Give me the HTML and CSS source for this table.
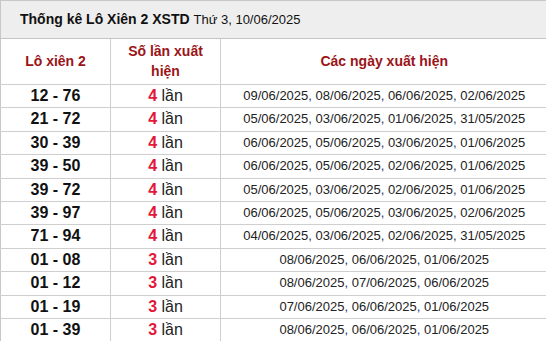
FILE: index.html
```html
<!DOCTYPE html>
<html lang="vi">
<head>
<meta charset="utf-8">
<title>Thống kê Lô Xiên 2 XSTD</title>
<link rel="stylesheet" href="styles.css">
</head>
<body>
<table class="stats">
  <colgroup>
    <col class="c1">
    <col class="c2">
    <col class="c3">
  </colgroup>
  <thead>
    <tr>
      <th class="title" colspan="3"><b>Thống kê Lô Xiên 2 XSTD</b> <span class="date">Thứ 3, 10/06/2025</span></th>
    </tr>
    <tr class="head">
      <th>Lô xiên 2</th>
      <th>Số lần xuất hiện</th>
      <th class="last">Các ngày xuất hiện</th>
    </tr>
  </thead>
  <tbody>
    <tr><td class="pair">12 - 76</td><td class="cnt"><b>4</b> lần</td><td class="days">09/06/2025<i>,</i> 08/06/2025<i>,</i> 06/06/2025<i>,</i> 02/06/2025</td></tr>
    <tr><td class="pair">21 - 72</td><td class="cnt"><b>4</b> lần</td><td class="days">05/06/2025<i>,</i> 03/06/2025<i>,</i> 01/06/2025<i>,</i> 31/05/2025</td></tr>
    <tr><td class="pair">30 - 39</td><td class="cnt"><b>4</b> lần</td><td class="days">06/06/2025<i>,</i> 05/06/2025<i>,</i> 03/06/2025<i>,</i> 01/06/2025</td></tr>
    <tr><td class="pair">39 - 50</td><td class="cnt"><b>4</b> lần</td><td class="days">06/06/2025<i>,</i> 05/06/2025<i>,</i> 02/06/2025<i>,</i> 01/06/2025</td></tr>
    <tr><td class="pair">39 - 72</td><td class="cnt"><b>4</b> lần</td><td class="days">05/06/2025<i>,</i> 03/06/2025<i>,</i> 02/06/2025<i>,</i> 01/06/2025</td></tr>
    <tr><td class="pair">39 - 97</td><td class="cnt"><b>4</b> lần</td><td class="days">06/06/2025<i>,</i> 05/06/2025<i>,</i> 03/06/2025<i>,</i> 02/06/2025</td></tr>
    <tr><td class="pair">71 - 94</td><td class="cnt"><b>4</b> lần</td><td class="days">04/06/2025<i>,</i> 03/06/2025<i>,</i> 02/06/2025<i>,</i> 31/05/2025</td></tr>
    <tr><td class="pair">01 - 08</td><td class="cnt"><b>3</b> lần</td><td class="days">08/06/2025<i>,</i> 06/06/2025<i>,</i> 01/06/2025</td></tr>
    <tr><td class="pair">01 - 12</td><td class="cnt"><b>3</b> lần</td><td class="days">08/06/2025<i>,</i> 07/06/2025<i>,</i> 06/06/2025</td></tr>
    <tr><td class="pair">01 - 19</td><td class="cnt"><b>3</b> lần</td><td class="days">07/06/2025<i>,</i> 06/06/2025<i>,</i> 01/06/2025</td></tr>
    <tr><td class="pair">01 - 39</td><td class="cnt"><b>3</b> lần</td><td class="days">08/06/2025<i>,</i> 06/06/2025<i>,</i> 01/06/2025</td></tr>
  </tbody>
</table>
</body>
</html>
```

FILE: styles.css
```css
html, body {
  margin: 0;
  padding: 0;
  overflow: hidden;
  background: #fff;
}
body {
  font-family: "Liberation Sans", Arial, sans-serif;
  color: #111;
}
.stats {
  border-collapse: collapse;
  table-layout: fixed;
  width: 547px;
  border-left: 1px solid #c8c8c8;
  border-top: 1px solid #c8c8c8;
}
.c1 { width: 110px; }
.c2 { width: 110px; }
.c3 { width: 327px; }

.stats th, .stats td {
  border-bottom: 1px solid #cfcfcf;
  border-right: 1px solid #cfcfcf;
  text-align: center;
}
.stats .last, .stats .days { border-right: none; }

.title {
  background: #efeeee;
  text-align: left !important;
  padding: 10px 18px 10px 19px;
  font-size: 14px;
  line-height: 16px;
  font-weight: normal;
  color: #111;
  border-bottom: 1px solid #c4c4c4 !important;
}
.title b { font-weight: bold; }
.title .date { font-size: 13px; }

.head th {
  font-size: 14px;
  font-weight: bold;
  color: #9b1418;
  padding: 2px 8px 3px;
  line-height: 20px;
  height: 40px;
}

.stats td {
  padding: 2px 4px;
  font-size: 16px;
  line-height: 18.4px;
}
.pair { font-weight: bold; color: #111; }
.cnt { color: #222; }
.cnt b { color: #e3173a; font-weight: bold; }
.days {
  font-size: 13px !important;
  color: #222;
}
.days i { font-style: normal; color: #2a3768; }
```
